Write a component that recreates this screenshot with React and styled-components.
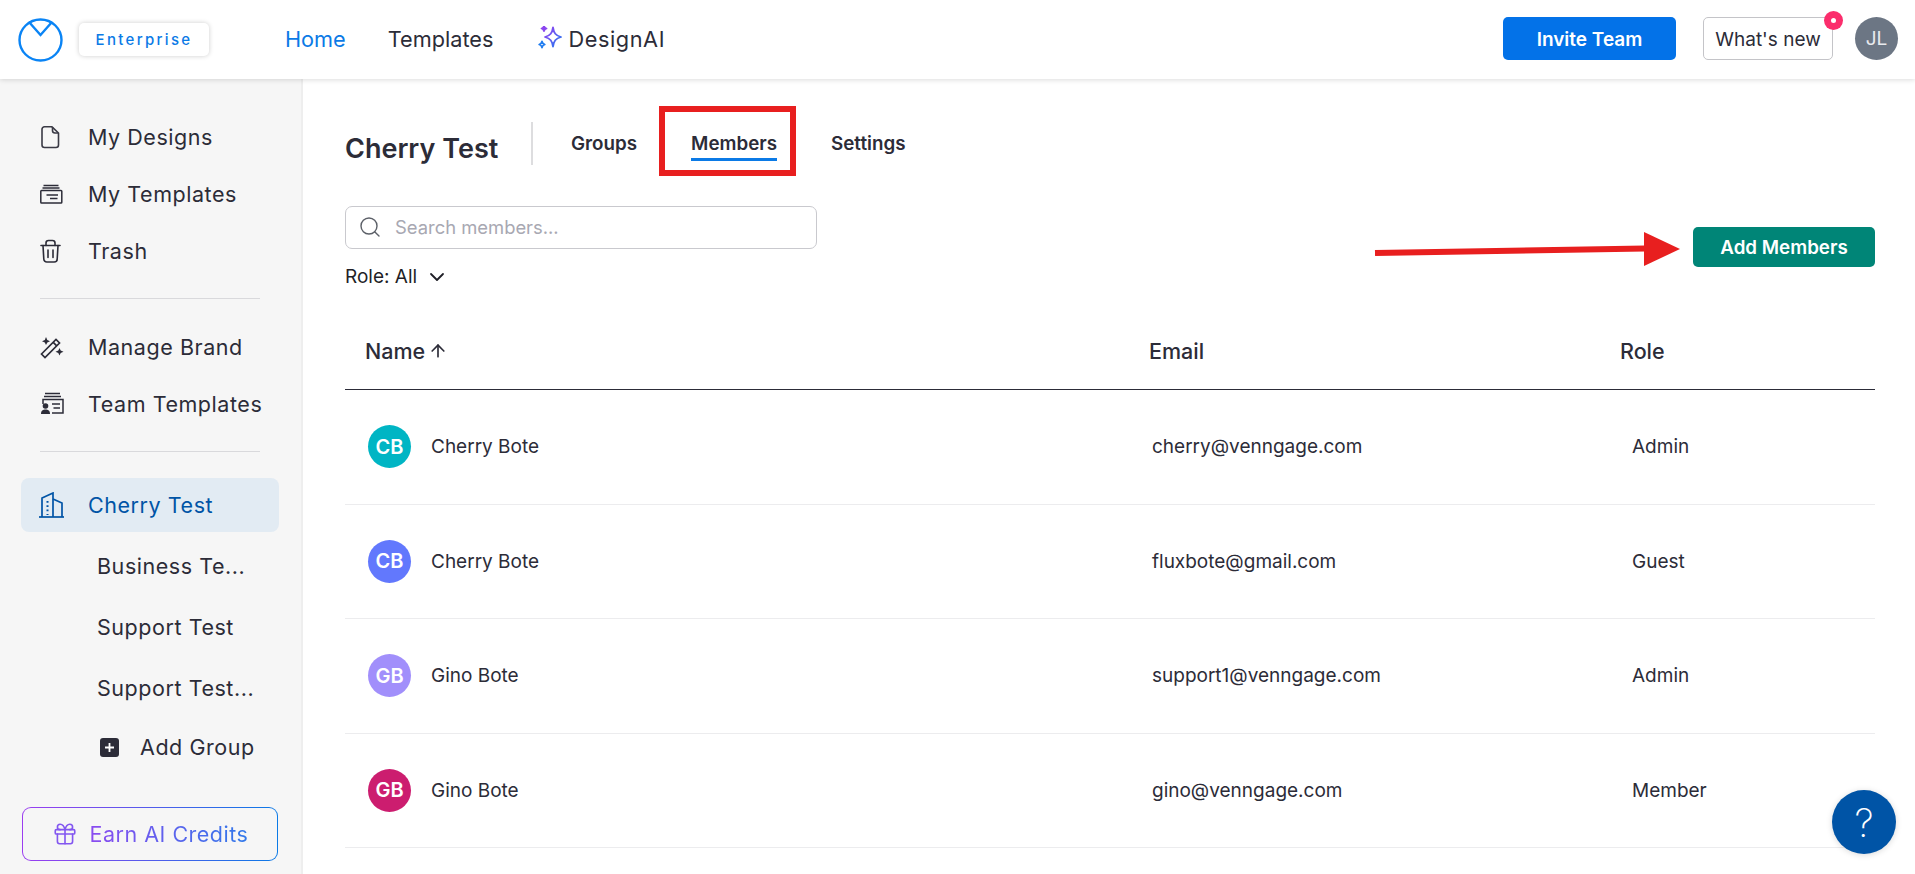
import React from 'react';
import styled, { createGlobalStyle } from 'styled-components';
import { Search, ChevronDown, ArrowUp, Gift } from 'lucide-react';

const Global = createGlobalStyle`
  html, body { margin: 0; padding: 0; background: #fff; }
  body { font-family: Inter, "Liberation Sans", sans-serif; color: #2c2c38; overflow: hidden; }
  * { box-sizing: border-box; }
`;

const Page = styled.div`
  width: 1915px;
  height: 874px;
  position: relative;
  overflow: hidden;
  display: flex;
  flex-direction: column;
`;

const Topbar = styled.header`
  height: 79px;
  flex: none;
  display: flex;
  align-items: center;
  padding: 0 17px 0 18px;
  background: #fff;
  box-shadow: 0 1px 5px rgba(0, 0, 0, 0.14);
  position: relative;
  z-index: 2;
`;

const Badge = styled.div`
  width: 130px;
  height: 33px;
  margin-left: 16px;
  border-radius: 5px;
  background: #fff;
  box-shadow: 0 0 5px rgba(0, 0, 0, 0.2);
  color: #0b7ae6;
  font-size: 15px;
  font-weight: 500;
  letter-spacing: 2.3px;
  display: flex;
  align-items: center;
  justify-content: center;
`;

const TopNav = styled.nav`
  display: flex;
  align-items: center;
  gap: 42px;
  margin-left: 76px;
  padding-bottom: 2px;
`;

const TopLink = styled.a`
  font-size: 21.7px;
  color: ${(p) => (p.$active ? '#0b7ae6' : '#2c2c38')};
  display: flex;
  align-items: center;
`;

const AiLink = styled(TopLink)`
  gap: 6px;
  margin-left: 3px;
  letter-spacing: 0.6px;
`;

const TopRight = styled.div`
  margin-left: auto;
  padding-bottom: 2px;
  display: flex;
  align-items: center;
`;

const InviteButton = styled.button`
  width: 173px;
  height: 43px;
  padding-top: 2px;
  border: none;
  border-radius: 5px;
  background: #0372e8;
  color: #fff;
  font: 600 19px Inter, sans-serif;
`;

const NewsButton = styled.button`
  width: 130px;
  height: 43px;
  margin-left: 27px;
  padding-top: 2px;
  position: relative;
  border: 1px solid #c4c4c8;
  border-radius: 5px;
  background: #fff;
  color: #2c2c38;
  font: 400 19px Inter, sans-serif;
`;

const NewsDot = styled.span`
  position: absolute;
  top: -7px;
  right: -11px;
  width: 19px;
  height: 19px;
  border-radius: 50%;
  background: #fb2d6c;
  display: flex;
  align-items: center;
  justify-content: center;
  &::after {
    content: '';
    width: 5px;
    height: 5px;
    border-radius: 50%;
    background: #fff;
  }
`;

const UserAvatar = styled.div`
  width: 43px;
  height: 43px;
  margin-left: 22px;
  border-radius: 50%;
  background: #6c7684;
  color: #e8eaee;
  font-size: 19px;
  display: flex;
  align-items: center;
  justify-content: center;
`;

const Body = styled.div`
  flex: 1;
  display: flex;
  min-height: 0;
`;

const Sidebar = styled.aside`
  width: 303px;
  flex: none;
  background: #f6f6f6;
  border-right: 2px solid #eeeeee;
  padding: 29px 22px 0 21px;
  display: flex;
  flex-direction: column;
`;

const SideItem = styled.div`
  height: ${(p) => p.$h || 57}px;
  flex: none;
  display: flex;
  align-items: center;
  padding-left: ${(p) => p.$indent || 19}px;
  margin-top: ${(p) => p.$mt || 0}px;
  border-radius: 8px;
  font-size: 21.5px;
  letter-spacing: 0.55px;
  white-space: nowrap;
  color: ${(p) => (p.$active ? '#0054a6' : '#2c2c38')};
  background: ${(p) => (p.$active ? '#e2ebf3' : 'transparent')};
`;

const SideIcon = styled.span`
  width: ${(p) => p.$w || 24}px;
  height: 26px;
  flex: none;
  margin-right: ${(p) => p.$mr || 24}px;
  display: flex;
  align-items: center;
  justify-content: center;
`;

const SideRule = styled.hr`
  width: 220px;
  flex: none;
  margin: 19px 0 ${(p) => p.$mb || 19}px 19px;
  border: none;
  border-top: 1px solid #d9d9dc;
`;

const AddIcon = styled.span`
  width: 19px;
  height: 19px;
  margin-right: 21px;
  border-radius: 3px;
  background: #2c2c38;
  display: flex;
  align-items: center;
  justify-content: center;
`;

const EarnButton = styled.div`
  width: 256px;
  height: 54px;
  flex: none;
  margin: 31px 0 0 1px;
  border: 1.5px solid transparent;
  border-radius: 9px;
  background: linear-gradient(#f6f6f6, #f6f6f6) padding-box,
    linear-gradient(90deg, #9b3df0, #0b7ae6) border-box;
  display: flex;
  align-items: center;
  justify-content: center;
  gap: 12px;
`;

const EarnText = styled.span`
  font-size: 21.5px;
  letter-spacing: 0.5px;
  background: linear-gradient(90deg, #8b4cf0, #2f78ea);
  -webkit-background-clip: text;
  background-clip: text;
  color: transparent;
`;

const Main = styled.main`
  flex: 1;
  padding: 22px 40px 0 42px;
  position: relative;
  min-width: 0;
`;

const TabBar = styled.div`
  display: flex;
  align-items: center;
  height: 85px;
`;

const Title = styled.h1`
  margin: 0;
  width: 188px;
  font-size: 27px;
  font-weight: 600;
  border-right: 2px solid #dddddf;
  height: 43px;
  line-height: 54px;
  white-space: nowrap;
`;

const Tab = styled.a`
  margin-left: ${(p) => p.$ml}px;
  margin-top: 6px;
  font-size: 18.8px;
  font-weight: 600;
  padding-bottom: 3px;
  border-bottom: 3px solid ${(p) => (p.$active ? '#0b7ae6' : 'transparent')};
`;

const FilterRow = styled.div`
  display: flex;
  justify-content: space-between;
  align-items: center;
  margin-top: 20px;
`;

const FilterLeft = styled.div`
  display: flex;
  flex-direction: column;
`;

const SearchBox = styled.div`
  width: 472px;
  height: 43px;
  border: 1px solid #c9c9ce;
  border-radius: 7px;
  display: flex;
  align-items: center;
  padding: 0 0 2px 12px;
  gap: 13px;
  color: #a8a8b2;
  font-size: 18.4px;
`;

const RoleFilter = styled.div`
  display: flex;
  align-items: center;
  gap: 8px;
  margin-top: 16px;
  font-size: 19px;
  color: #1f1f27;
  line-height: 22px;
`;

const AddButton = styled.button`
  width: 182px;
  height: 40px;
  margin-bottom: 1px;
  border: none;
  border-radius: 5px;
  background: #008577;
  color: #fff;
  font: 600 18.8px Inter, sans-serif;
`;

const TableHead = styled.div`
  display: grid;
  grid-template-columns: 804px 471px 1fr;
  align-items: center;
  height: 77px;
  margin-top: 24px;
  border-bottom: 1px solid #2c2c38;
`;

const Row = styled.div`
  display: grid;
  grid-template-columns: 804px 471px 1fr;
  align-items: center;
  height: 114.5px;
  border-bottom: 1px solid #ececee;
`;

const HeadCell = styled.div`
  padding-left: ${(p) => p.$pad}px;
  font-size: 21.5px;
  font-weight: 500;
  display: flex;
  align-items: center;
  gap: 3px;
`;

const Cell = styled.div`
  padding-left: ${(p) => p.$pad}px;
  font-size: 19px;
  display: flex;
  align-items: center;
`;

const Avatar = styled.div`
  width: 43px;
  height: 43px;
  margin-right: 20px;
  border-radius: 50%;
  background: ${(p) => p.$color};
  color: #fff;
  font-size: 20px;
  font-weight: 600;
  display: flex;
  align-items: center;
  justify-content: center;
`;

const RedBox = styled.div`
  position: absolute;
  left: 356px;
  top: 27px;
  width: 137px;
  height: 70px;
  border: 6px solid #e81f1f;
`;

const Arrow = styled.svg`
  position: absolute;
  left: 1067px;
  top: 148px;
`;

const HelpButton = styled.div`
  position: absolute;
  left: 1832px;
  top: 790px;
  width: 64px;
  height: 64px;
  border-radius: 50%;
  background: #0054a6;
  box-shadow: 0 1px 6px rgba(0, 0, 0, 0.15);
  color: #fff;
  font: 200 39px Inter, sans-serif;
  display: flex;
  align-items: center;
  justify-content: center;
  z-index: 3;
`;

const Logo = () => (
  <svg width="45" height="44" viewBox="0 0 45 44" fill="none" stroke="#0a84f5" strokeWidth="2.4">
    <ellipse cx="22.5" cy="22" rx="21" ry="20.5" />
    <path d="M11 4 L22.5 17 L34 4" />
  </svg>
);

const Sparkles = () => (
  <svg width="24" height="26" viewBox="0 0 24 26" fill="none" strokeWidth="1.8" strokeLinejoin="round">
    <defs>
      <linearGradient id="spark" x1="0" y1="0" x2="1" y2="1">
        <stop offset="0" stopColor="#9b3df0" />
        <stop offset="1" stopColor="#1f7cf0" />
      </linearGradient>
    </defs>
    <path d="M15 1.500 C15.800 7 17.600 9.500 23 11 C17.600 12.500 15.800 15 15 20.500 C14.200 15 12.400 12.500 7 11 C12.400 9.500 14.200 7 15 1.500 Z" stroke="url(#spark)" />
    <path d="M6 0 C6.300 1.500 6.900 2.100 8.500 2.500 C6.900 2.900 6.300 3.500 6 5 C5.700 3.500 5.100 2.900 3.500 2.500 C5.100 2.100 5.700 1.500 6 0 Z" stroke="#8b45f0" fill="#8b45f0" />
    <path d="M4 15.500 C4.300 17.200 4.900 17.900 6.800 18.500 C4.900 19.100 4.300 19.800 4 21.500 C3.700 19.800 3.100 19.100 1.200 18.500 C3.100 17.900 3.700 17.200 4 15.500 Z" stroke="#1f7cf0" />
  </svg>
);

const FileIcon = () => (
  <svg width="24" height="24" viewBox="0 0 24 24" fill="none" stroke="#3a3a45" strokeWidth="1.600" strokeLinejoin="round">
    <path d="M4.500 1.800 H12 L18.500 8 V20 A2.500 2.500 0 0 1 16 22.500 H4.500 A2.500 2.500 0 0 1 2 20 V4.300 A2.500 2.500 0 0 1 4.500 1.800 Z" />
    <path d="M12.500 2 V5.500 A2.500 2.500 0 0 0 15 8 H18" />
  </svg>
);

const TemplatesIcon = () => (
  <svg width="24" height="24" viewBox="0 0 24 24" fill="none" stroke="#2c2c38" strokeWidth="1.500">
    <path d="M3.500 3.500 H18.500 M2.500 6 H19.500" />
    <rect x="0.800" y="8.500" width="21" height="12.500" rx="0.800" />
    <path d="M6.500 13 H18 M10 16.500 H17.500" />
  </svg>
);

const TrashIcon = () => (
  <svg width="24" height="24" viewBox="0 0 24 24" fill="none" stroke="#2c2c38" strokeWidth="1.600" strokeLinecap="round" strokeLinejoin="round">
    <path d="M1 6.500 H20" />
    <path d="M6 6.500 V4 A2.500 2.500 0 0 1 8.500 1.500 H12.500 A2.500 2.500 0 0 1 15 4 V6.500" />
    <path d="M3 6.500 L3.800 20 A3 3 0 0 0 6.800 23 H14.200 A3 3 0 0 0 17.200 20 L18 6.500" />
    <path d="M8 11 V18.500 M13 11 V18.500" />
  </svg>
);

const WandIcon = () => (
  <svg width="24" height="24" viewBox="0 0 24 24" fill="none" stroke="#2c2c38" strokeWidth="1.700">
    <path d="M1.500 19 L16 4.500 L19.500 8 L5 22.500 Z" />
    <path d="M13.200 7.300 L16.700 10.800" />
    <path d="M6 2 L7.300 5 L10 6.300 L7.300 7.500 L6 10 L4.800 7.500 L2 6.300 L4.800 5 Z" fill="#2c2c38" stroke="none" />
    <path d="M18 11.500 L19.200 14 L22 15.300 L19.200 16.500 L18 19 L16.800 16.500 L14 15.300 L16.800 14 Z" fill="#2c2c38" stroke="none" transform="translate(1.500,1.500)" />
  </svg>
);

const TeamTemplatesIcon = () => (
  <svg width="24" height="24" viewBox="0 0 24 24" fill="none" stroke="#2c2c38" strokeWidth="1.500">
    <path d="M5 1.500 H20 M4 4.500 H21" />
    <path d="M3 12 V7.500 H23 V21 H12" />
    <path d="M12 12 H20 M13.500 16 H20" />
    <circle cx="5.500" cy="14" r="2.800" fill="#2c2c38" stroke="none" />
    <path d="M1 22 C1 18.500 3 17.500 5.500 17.500 C8 17.500 10 18.500 10 22 Z" fill="#2c2c38" stroke="none" />
  </svg>
);

const BuildingIcon = () => (
  <svg width="27" height="26" viewBox="0 0 27 26" fill="none" stroke="#0054a6" strokeWidth="1.700">
    <path d="M1 25 H26" />
    <path d="M4 25 V6 L15 1 V25" />
    <path d="M15 7 L24 11 V25" />
    <path d="M9.500 9 V23" strokeDasharray="1.700 2.600" strokeWidth="2" />
  </svg>
);

const members = [
  { initials: 'CB', color: '#00b5c4', name: 'Cherry Bote', email: 'cherry@venngage.com', role: 'Admin' },
  { initials: 'CB', color: '#6278fd', name: 'Cherry Bote', email: 'fluxbote@gmail.com', role: 'Guest' },
  { initials: 'GB', color: '#a18ffb', name: 'Gino Bote', email: 'support1@venngage.com', role: 'Admin' },
  { initials: 'GB', color: '#cc1d6f', name: 'Gino Bote', email: 'gino@venngage.com', role: 'Member' },
];

const App = () => {
  return (
    <Page>
      <Global />
      <Topbar>
        <Logo />
        <Badge>Enterprise</Badge>
        <TopNav>
          <TopLink $active>Home</TopLink>
          <TopLink>Templates</TopLink>
          <AiLink><Sparkles />DesignAI</AiLink>
        </TopNav>
        <TopRight>
          <InviteButton>Invite Team</InviteButton>
          <NewsButton>What's new<NewsDot /></NewsButton>
          <UserAvatar>JL</UserAvatar>
        </TopRight>
      </Topbar>
      <Body>
        <Sidebar>
          <SideItem><SideIcon><FileIcon /></SideIcon>My Designs</SideItem>
          <SideItem><SideIcon><TemplatesIcon /></SideIcon>My Templates</SideItem>
          <SideItem><SideIcon><TrashIcon /></SideIcon>Trash</SideItem>
          <SideRule />
          <SideItem><SideIcon><WandIcon /></SideIcon>Manage Brand</SideItem>
          <SideItem><SideIcon><TeamTemplatesIcon /></SideIcon>Team Templates</SideItem>
          <SideRule $mb={26} />
          <SideItem $active $h={54} $indent={17}><SideIcon $w={27} $mr={23}><BuildingIcon /></SideIcon>Cherry Test</SideItem>
          <SideItem $h={61} $indent={76} $mt={3}>Business Te...</SideItem>
          <SideItem $h={61} $indent={76}>Support Test</SideItem>
          <SideItem $h={61} $indent={76}>Support Test...</SideItem>
          <SideItem $h={58} $indent={79}>
            <AddIcon>
              <svg width="11" height="11" viewBox="0 0 11 11" stroke="#fff" strokeWidth="1.800"><path d="M5.500 1 V10 M1 5.500 H10" /></svg>
            </AddIcon>
            Add Group
          </SideItem>
          <EarnButton>
            <Gift size={26} strokeWidth={1.5} color="#8357f0" />
            <EarnText>Earn AI Credits</EarnText>
          </EarnButton>
        </Sidebar>
        <Main>
          <TabBar>
            <Title>Cherry Test</Title>
            <Tab $ml={38}>Groups</Tab>
            <Tab $ml={54} $active>Members</Tab>
            <Tab $ml={54}>Settings</Tab>
          </TabBar>
          <FilterRow>
            <FilterLeft>
              <SearchBox><Search size={24} strokeWidth={1.4} color="#5c6068" />Search members...</SearchBox>
              <RoleFilter>Role: All <ChevronDown size={24} strokeWidth={1.8} /></RoleFilter>
            </FilterLeft>
            <AddButton>Add Members</AddButton>
          </FilterRow>
          <TableHead>
            <HeadCell $pad={20}>Name <ArrowUp size={20} strokeWidth={2} /></HeadCell>
            <HeadCell $pad={0}>Email</HeadCell>
            <HeadCell $pad={0}>Role</HeadCell>
          </TableHead>
          {members.map((m) => (
            <Row key={m.email}>
              <Cell $pad={23}><Avatar $color={m.color}>{m.initials}</Avatar>{m.name}</Cell>
              <Cell $pad={3}>{m.email}</Cell>
              <Cell $pad={12}>{m.role}</Cell>
            </Row>
          ))}
          <RedBox />
          <Arrow width="310" height="40" viewBox="0 0 310 40">
            <path d="M5 26 L275 21.500" stroke="#e81f1f" strokeWidth="6" />
            <path d="M274 5 L310 22 L274 39 Z" fill="#e81f1f" />
          </Arrow>
        </Main>
      </Body>
      <HelpButton>?</HelpButton>
    </Page>
  );
};

export default App;
